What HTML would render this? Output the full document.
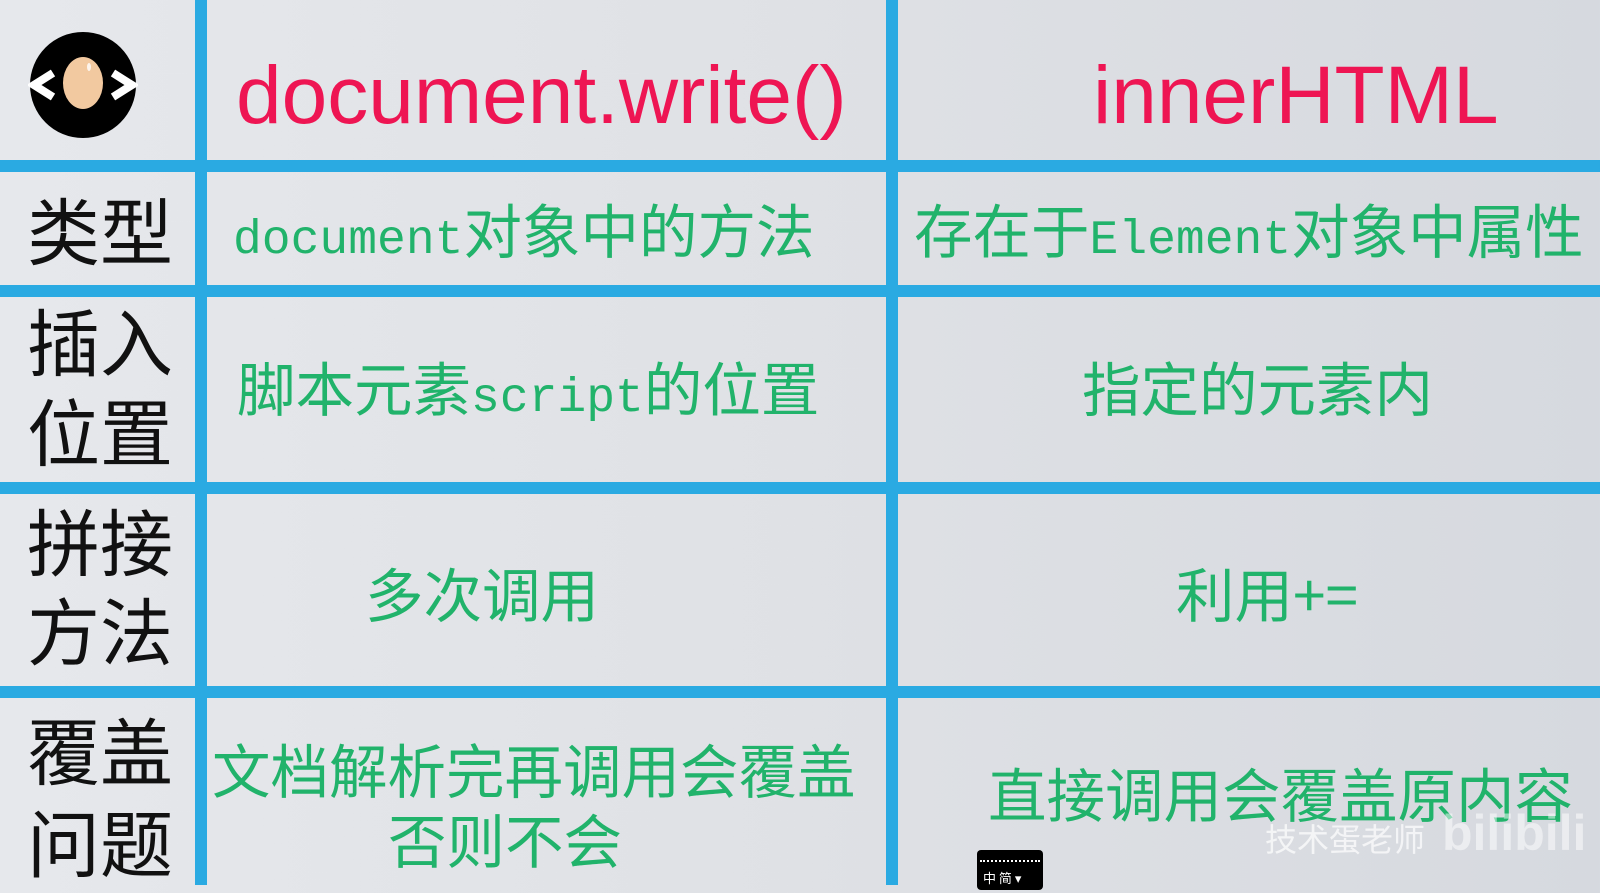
<!DOCTYPE html>
<html><head><meta charset="utf-8"><style>
html,body{margin:0;padding:0}
body{width:1600px;height:885px;position:relative;overflow:hidden;background:linear-gradient(90deg,#e6e8ec 0%,#dfe1e5 50%,#d6d9df 100%);font-family:"Liberation Sans","Noto Sans CJK SC",sans-serif}
.h{position:absolute;left:0;width:1600px;height:12px;background:#2aaae2}
.v{position:absolute;top:0;width:12px;height:885px;background:#2aaae2}
.t{position:absolute;white-space:nowrap;line-height:1}
.red{color:#ee1553;font-size:82px;font-family:"Liberation Sans",sans-serif}
.lab{color:#111;font-size:73px;font-family:"Noto Sans CJK SC",sans-serif}
.g{color:#21b36b;font-size:58.5px;font-family:"Noto Sans CJK SC",sans-serif}
.g .m{font-family:"Liberation Mono",monospace;font-size:48px}
</style></head><body>
<div class="h" style="top:160px"></div>
<div class="h" style="top:285px"></div>
<div class="h" style="top:482px"></div>
<div class="h" style="top:686px"></div>
<div class="v" style="left:195px"></div>
<div class="v" style="left:886px"></div>

<svg style="position:absolute;left:28px;top:30px" width="110" height="110" viewBox="0 0 110 110">
<circle cx="55" cy="55" r="53" fill="#000"/>
<ellipse cx="55" cy="53" rx="20" ry="26" fill="#f2c9a0"/>
<ellipse cx="61" cy="37" rx="2" ry="4" fill="#fff" opacity=".8"/>
<path d="M25 43 L6 55 L25 67" stroke="#fff" stroke-width="8" fill="none"/>
<path d="M85 43 L104 55 L85 67" stroke="#fff" stroke-width="8" fill="none"/>
</svg>

<div class="t red" style="left:236px;top:55px">document.write()</div>
<div class="t red" style="left:1093px;top:55px">innerHTML</div>

<div class="t lab" style="left:27px;top:192px">类型</div>
<div class="t lab" style="left:27px;top:303px">插入</div>
<div class="t lab" style="left:27px;top:393px">位置</div>
<div class="t lab" style="left:27px;top:503px">拼接</div>
<div class="t lab" style="left:27px;top:592px">方法</div>
<div class="t lab" style="left:27px;top:712px">覆盖</div>
<div class="t lab" style="left:27px;top:804px">问题</div>

<div class="t g" style="left:233px;top:199px"><span class="m">document</span>对象中的方法</div>
<div class="t g" style="left:914px;top:199px">存在于<span class="m">Element</span>对象中属性</div>
<div class="t g" style="left:237px;top:357px">脚本元素<span class="m">script</span>的位置</div>
<div class="t g" style="left:1082px;top:357px">指定的元素内</div>
<div class="t g" style="left:365px;top:563px">多次调用</div>
<div class="t g" style="left:1176px;top:563px">利用+=</div>
<div class="t g" style="left:212px;top:739px">文档解析完再调用会覆盖</div>
<div class="t g" style="left:388px;top:809px">否则不会</div>
<div class="t g" style="left:988px;top:763px">直接调用会覆盖原内容</div>

<div class="t" style="left:1265px;top:822px;font-size:32px;color:rgba(255,255,255,.7);font-family:'Noto Sans CJK SC',sans-serif">技术蛋老师</div>
<div class="t" style="left:1442px;top:808px;font-size:50px;font-weight:bold;color:rgba(255,255,255,.5);font-family:'Liberation Sans',sans-serif">bilibili</div>
<div style="position:absolute;left:977px;top:850px;width:66px;height:40px;background:#000;border-radius:4px">
<div style="margin:10px 3px 0;border-top:2px dotted #fff"></div>
<div style="color:#fff;font-size:13px;padding:6px 0 0 6px;font-family:'Noto Sans CJK SC',sans-serif">中 简 ▾</div>
</div>
</body></html>
